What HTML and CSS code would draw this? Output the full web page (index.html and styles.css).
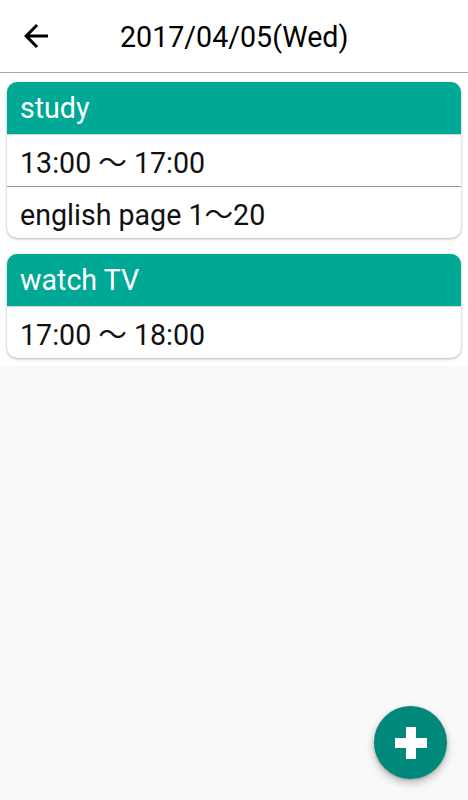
FILE: index.html
```html
<!DOCTYPE html>
<html lang="ja">
<head>
<meta charset="utf-8">
<title>2017/04/05(Wed)</title>
<link rel="stylesheet" href="styles.css">
</head>
<body>
<header class="appbar">
  <button class="back" aria-label="back">
    <svg viewBox="0 0 24 24" width="36" height="36"><path d="M20 11H7.83l5.59-5.59L12 4l-8 8 8 8 1.41-1.41L7.83 13H20v-2z" fill="#000"/></svg>
  </button>
  <h1 class="title">2017/04/05(Wed)</h1>
</header>
<main class="list">
  <section class="card">
    <div class="card-head">study</div>
    <div class="row">13:00 〜 17:00</div>
    <div class="row sep">english page 1〜20</div>
  </section>
  <section class="card">
    <div class="card-head">watch TV</div>
    <div class="row">17:00 〜 18:00</div>
  </section>
</main>
<button class="fab" aria-label="add">
  <svg viewBox="0 0 32 32" width="32" height="32"><rect x="11" y="0" width="10" height="32" fill="#fff"/><rect x="0" y="11" width="32" height="10" fill="#fff"/></svg>
</button>
</body>
</html>
```

FILE: styles.css
```css
html, body {
  margin: 0;
  padding: 0;
  background: #f9f9f9;
  font-family: Roboto, "Noto Sans CJK JP", sans-serif;
  color: #111;
}
.appbar {
  height: 72px;
  background: #fff;
  border-bottom: 1px solid #a8a8a8;
  display: flex;
  align-items: center;
}
.back {
  margin-left: 18px;
  width: 36px;
  height: 36px;
  padding: 0;
  border: 0;
  background: none;
  display: flex;
}
.title {
  margin: 0 0 0 66px;
  font-size: 28.6px;
  font-weight: 400;
  color: #000;
  line-height: 1;
  padding-top: 2px;
}
.list {
  background: #fff;
  padding: 9px 7px 8px;
  display: flex;
  flex-direction: column;
  gap: 16px;
}
.card {
  background: #fff;
  border-radius: 10px;
  overflow: hidden;
  box-shadow: 0 1px 3px rgba(0,0,0,0.28), 0 0 1px rgba(0,0,0,0.12);
}
.card-head {
  height: 52px;
  background: #00a896;
  color: #fff;
  font-size: 28.6px;
  display: flex;
  align-items: center;
  padding-left: 13px;
  box-shadow: 0 1px 1px rgba(0,0,0,0.15);
  position: relative;
}
.row {
  height: 52px;
  font-size: 28.6px;
  display: flex;
  align-items: center;
  padding-left: 13px;
  color: #111;
  box-sizing: border-box;
}
.row.sep {
  border-top: 1px solid #9a9a9a;
}
.fab {
  position: fixed;
  right: 21px;
  bottom: 21px;
  width: 73px;
  height: 73px;
  border-radius: 50%;
  border: 0;
  padding: 0;
  background: #00897b;
  box-shadow: 0 4px 8px rgba(0,0,0,0.25), 0 1px 3px rgba(0,0,0,0.2);
  display: flex;
  align-items: center;
  justify-content: center;
}
```
